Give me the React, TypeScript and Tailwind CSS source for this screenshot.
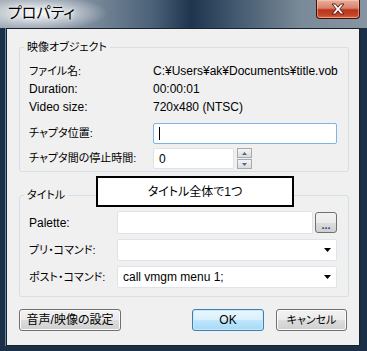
import React from "react";

const font = "font-['Liberation_Sans','Noto_Sans_CJK_JP',sans-serif] [font-feature-settings:'palt']";

function Arrow() {
  return (
    <svg width="7" height="4" viewBox="0 0 7 4" className="shrink-0">
      <path d="M0 0h7L3.5 4z" fill="#000" />
    </svg>
  );
}

function Select({ value }: { value?: string }) {
  return (
    <div className="flex h-[22px] w-[220px] items-center justify-between rounded-[2px] border border-[#dfe4ea] bg-white pl-[5px] pr-[5px] text-[12px]">
      <span>{value}</span>
      <Arrow />
    </div>
  );
}

function Button({ label, w, primary, jp }: { label: string; w: string; primary?: boolean; jp?: boolean }) {
  return (
    <div
      className={
        "flex h-[22px] items-center justify-center rounded-[3px] border " +
        (jp ? "text-[11px] " : "text-[12px] ") +
        w +
        (primary
          ? " border-[#3c7fb1] bg-[linear-gradient(#eaf6fd,#d9f0fc_50%,#bee6fd_51%,#a7d9f5)] shadow-[inset_0_0_0_1px_#c9eafc]"
          : " border-[#707070] bg-[linear-gradient(#f2f2f2,#ebebeb_50%,#dddddd_51%,#cfcfcf)] shadow-[inset_0_0_0_1px_#fbfbfb]")
      }
    >
      {label}
    </div>
  );
}

function Group({ title, h, className, children }: { title: string; h: string; className?: string; children: React.ReactNode }) {
  return (
    <fieldset className={"ml-[12px] w-[330px] rounded-[3px] border border-[#d5dfe5] pl-[9px] " + h + " " + (className ?? "")}>
      <legend className="-ml-[5px] px-[3px] text-[11px] leading-[14px]">{title}</legend>
      {children}
    </fieldset>
  );
}

export default function App() {
  return (
    <div className={"relative flex h-[351px] w-[367px] flex-col bg-[#1b2f47] text-black " + font}>
      {/* title bar */}
      <div className="flex h-[28px] shrink-0 items-start justify-between bg-[radial-gradient(ellipse_70px_18px_at_38px_13px,rgba(255,255,255,0.95),rgba(255,255,255,0)),linear-gradient(90deg,#9aa6b1_0%,#8291a0_22%,#4a6077_42%,#1f354f_52%,#42586e_64%,#7a8a98_82%,#8795a2_100%)] pr-[7px]">
        <span className="pl-[8px] pt-[3px] text-[15px] leading-[20px] [text-shadow:0_0_6px_#fff,0_0_3px_#fff]">プロパティ</span>
        <div className="flex h-[19px] w-[44px] items-center justify-center rounded-b-[4px] border border-t-0 border-[#3f1209] bg-[linear-gradient(#e8ae9c,#d9826b_45%,#bb3418_55%,#c4462a_85%,#e0704a)] shadow-[inset_0_0_0_1px_rgba(255,220,200,0.45)]">
          <svg width="14" height="12" viewBox="0 0 14 12">
            <path d="M1 1h3.5L7 4.2 9.5 1H13L8.8 6 13 11H9.5L7 7.8 4.5 11H1l4.2-5z" fill="#fff" stroke="#5a1f14" strokeWidth="1" strokeLinejoin="round" />
          </svg>
        </div>
      </div>

      {/* client */}
      <div className="relative ml-[6px] h-[318px] w-[354px] border border-[#17222f] bg-[#f0f0f0] shadow-[-1px_0_0_#5f86aa,1px_0_0_#1c2c3e]">
        <Group title="映像オブジェクト" h="h-[132px]" className="mt-[11px]">
          <div className="grid grid-cols-[124px_1fr] pt-[8px] text-[12px]">
            <div className="flex h-[18px] items-center text-[11px]">ファイル名:</div>
            <div className="flex h-[18px] items-center">C:¥Users¥ak¥Documents¥title.vob</div>
            <div className="flex h-[18px] items-center">Duration:</div>
            <div className="flex h-[18px] items-center">00:00:01</div>
            <div className="flex h-[18px] items-center">Video size:</div>
            <div className="flex h-[18px] items-center">720x480 (NTSC)</div>
            <div className="mt-[7px] flex h-[21px] items-center text-[11px]">チャプタ位置:</div>
            <div className="mt-[7px] flex h-[21px] w-[184px] items-center rounded-[2px] border border-[#7eb4ea] bg-white pl-[5px]">
              <div className="h-[13px] w-px bg-black" />
            </div>
            <div className="mt-[4px] flex h-[21px] items-center text-[11px]">チャプタ間の停止時間:</div>
            <div className="mt-[4px] flex h-[21px] items-center">
              <div className="flex h-[21px] w-[81px] items-center rounded-[2px] border border-[#dde3e9] bg-white pl-[5px]">0</div>
              <div className="ml-[3px] flex h-[21px] w-[15px] flex-col">
                <div className="flex h-[10px] items-center justify-center border border-[#a7aaad] bg-[linear-gradient(#f4f4f4,#dcdcdc)]">
                  <svg width="5" height="3" viewBox="0 0 5 3"><path d="M2.5 0L5 3H0z" fill="#4b6a96" /></svg>
                </div>
                <div className="mt-px flex h-[10px] items-center justify-center border border-[#a7aaad] bg-[linear-gradient(#f4f4f4,#dcdcdc)]">
                  <svg width="5" height="3" viewBox="0 0 5 3"><path d="M0 0h5L2.5 3z" fill="#4b6a96" /></svg>
                </div>
              </div>
            </div>
          </div>
        </Group>

        <Group title="タイトル" h="h-[109px]" className="mt-[16px]">
          <div className="grid grid-cols-[88px_1fr] items-center pt-[9px] text-[12px]">
            <div className="flex h-[23px] items-center">Palette:</div>
            <div className="flex h-[23px] items-center">
              <div className="h-[23px] w-[196px] rounded-[2px] border border-[#dfe4ea] bg-white" />
              <div className="ml-[2px] flex h-[21px] w-[22px] items-end justify-center rounded-[3px] border border-[#707070] bg-[linear-gradient(#f2f2f2,#ebebeb_50%,#dddddd_51%,#cfcfcf)] pb-[3px] text-[11px] font-bold leading-[8px] text-[#1d3f7c]">
                ...
              </div>
            </div>
            <div className="mt-[5px] flex h-[22px] items-center text-[11px]">プリ・コマンド:</div>
            <div className="mt-[5px]"><Select /></div>
            <div className="mt-[5px] flex h-[22px] items-center text-[11px]">ポスト・コマンド:</div>
            <div className="mt-[5px]"><Select value="call vmgm menu 1;" /></div>
          </div>
        </Group>

        <div className="mt-[12px] flex items-center pl-[12px]">
          <Button label="音声/映像の設定" w="w-[102px]" />
          <div className="ml-[71px]"><Button label="OK" w="w-[72px]" primary /></div>
          <div className="ml-[12px]"><Button label="キャンセル" w="w-[71px]" jp /></div>
        </div>

        {/* annotation overlay */}
        <div className="absolute left-[89px] top-[147px] flex h-[31px] w-[198px] items-center justify-center border-2 border-black bg-white text-[12px]">
          タイトル全体で1つ
        </div>
      </div>
    </div>
  );
}
